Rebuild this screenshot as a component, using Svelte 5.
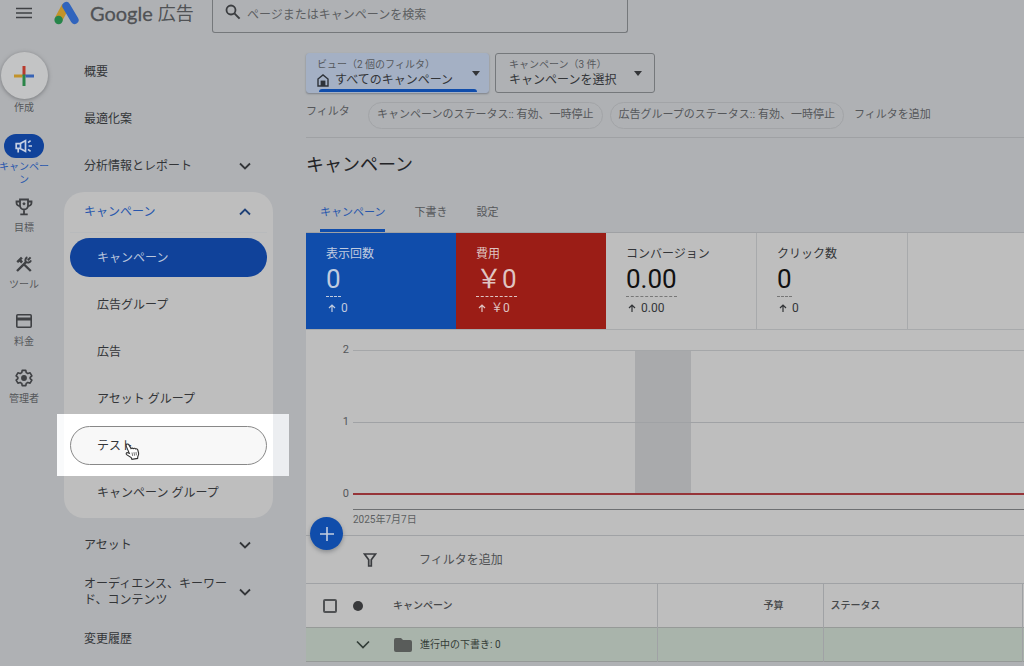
<script>
  const topItems = [
    { label: '概要', expandable: false },
    { label: '最適化案', expandable: false },
    { label: '分析情報とレポート', expandable: true }
  ];
  const campaignItems = ['キャンペーン', '広告グループ', '広告', 'アセット グループ', 'テスト', 'キャンペーン グループ'];
  const bottomItems = [
    { label: 'アセット', expandable: true },
    { label: 'オーディエンス、キーワード、コンテンツ', expandable: true },
    { label: '変更履歴', expandable: false }
  ];
  const metrics = [
    { label: '表示回数', value: '0', change: '0', tone: 'blue' },
    { label: '費用', value: '￥0', change: '￥0', tone: 'red' },
    { label: 'コンバージョン', value: '0.00', change: '0.00', tone: 'plain' },
    { label: 'クリック数', value: '0', change: '0', tone: 'plain' }
  ];
  const chips = ['キャンペーンのステータス:: 有効、一時停止', '広告グループのステータス:: 有効、一時停止'];
  let current = $state('キャンペーン');
</script>

{#snippet chevron(up)}
  <svg class="chevron" width="12" height="8" viewBox="0 0 12 8" aria-hidden="true">
    <path d={up ? 'M1 6.5 6 1.5 11 6.5' : 'M1 1.5 6 6.5 11 1.5'} fill="none" stroke="currentColor" stroke-width="1.8" />
  </svg>
{/snippet}

<div class="page">
  <header>
    <button class="menu" aria-label="メニュー">
      <svg width="16" height="12" viewBox="0 0 16 12"><path d="M0 1.5h16M0 6h16M0 10.5h16" stroke="#3f4144" stroke-width="1.6" /></svg>
    </button>
    <a class="brand" href="#home">
      <svg width="25" height="24" viewBox="0 0 25 24" aria-hidden="true">
        <path d="M8.200 3 15.400 6.500 8.200 20 1 16.500Z" fill="#c2932a" />
        <path d="M12.300 5 20.600 19" stroke="#3064bd" stroke-width="8" stroke-linecap="round" />
        <circle cx="4.600" cy="19" r="4.200" fill="#26854a" />
      </svg>
      <span class="google">Google</span><span class="ads">広告</span>
    </a>
    <label class="search">
      <svg width="16" height="16" viewBox="0 0 16 16" aria-hidden="true">
        <circle cx="6" cy="6" r="4.5" fill="none" stroke="#3b3d40" stroke-width="1.8" />
        <path d="M9.4 9.4 14.6 14.6" stroke="#3b3d40" stroke-width="2" />
      </svg>
      <input type="search" aria-label="検索" placeholder="ページまたはキャンペーンを検索" />
    </label>
  </header>

  <div class="body">
    <nav class="rail" aria-label="メイン">
      <button class="create">
        <span class="disc">
          <svg width="20" height="20" viewBox="0 0 20 20">
            <path d="M10 0v10" stroke="#b83a2d" stroke-width="3" />
            <path d="M0 10h8.5" stroke="#c2932a" stroke-width="3" />
            <path d="M10 8.5V20" stroke="#2a8548" stroke-width="3" />
            <path d="M11.5 10H20" stroke="#3763b5" stroke-width="3" />
          </svg>
        </span>
        作成
      </button>
      <a class="rail-item active" href="#campaigns">
        <span class="glyph">
          <svg width="20" height="16" viewBox="0 0 20 16" fill="none" stroke="#c6d0e4" stroke-width="1.7">
            <path d="M2.2 5.6h4L11.5 2.6v10.8L6.2 10.4h-4zM6.5 5.6v4.8M4.2 10.4v4" />
            <path d="M14 4.6 16.6 2.6M14.6 8H18M14 11.4 16.6 13.4" />
          </svg>
        </span>
        キャンペーン
      </a>
      <a class="rail-item" href="#goals">
        <span class="glyph">
          <svg width="18" height="18" viewBox="0 0 18 18" fill="none" stroke="#3f4144" stroke-width="1.8">
            <path d="M5 1.5h8v6a4 4 0 0 1-8 0zM5 3.5H1.5v1.3A3.2 3.2 0 0 0 5 8M13 3.5h3.5v1.3A3.2 3.2 0 0 1 13 8M9 11.5v5M5.3 16.4h7.4" />
            <circle cx="9" cy="5.8" r="1" fill="#3f4144" stroke-width="1" />
          </svg>
        </span>
        目標
      </a>
      <a class="rail-item" href="#tools">
        <span class="glyph">
          <svg width="18" height="18" viewBox="0 0 18 18" fill="none" stroke="#3f4144">
            <path d="M2 16 11.2 6.8M9.6 10 15.8 16" stroke-width="2.4" />
            <path d="M15.6 2.4 12.8 5.2M16 5.4A3.2 3.2 0 0 1 10.7 6.6 3.2 3.2 0 0 1 12.4 2.2" stroke-width="2" />
            <path d="M1.4 6.2 6 1.8 7.8 3.4 6.4 4.8 8 6.6 6.2 8.4 4.5 6.7 3 8z" fill="#3f4144" stroke="none" />
          </svg>
        </span>
        ツール
      </a>
      <a class="rail-item" href="#billing">
        <span class="glyph">
          <svg width="18" height="16" viewBox="0 0 18 16" fill="none" stroke="#3f4144">
            <rect x="1.8" y="1.8" width="14.4" height="12.4" rx="1" stroke-width="1.6" />
            <path d="M1.8 6h14.4" stroke-width="3" />
          </svg>
        </span>
        料金
      </a>
      <a class="rail-item" href="#admin">
        <span class="glyph">
          <svg width="18" height="18" viewBox="0 0 24 24" fill="none" stroke="#3f4144" stroke-width="2.2" stroke-linejoin="round">
            <path d="M9.6 1.8h4.8l.6 3 2.2 1.3 2.9-1 2.4 4.1-2.3 2v1.6l2.3 2-2.4 4.1-2.9-1-2.2 1.3-.6 3H9.600l-.6-3-2.200-1.300-2.900 1-2.400-4.100 2.300-2v-1.600l-2.300-2 2.400-4.100 2.900 1L9 4.800z" />
            <circle cx="12" cy="12" r="2.800" fill="#3f4144" />
          </svg>
        </span>
        管理者
      </a>
    </nav>

    <nav class="side" aria-label="セクション">
      {#each topItems as item}
        <button class="row">
          <span>{item.label}</span>
          {#if item.expandable}{@render chevron(false)}{/if}
        </button>
      {/each}
      <section class="card">
        <button class="card-head" aria-expanded="true">
          <span>キャンペーン</span>
          {@render chevron(true)}
        </button>
        <div class="items">
          {#each campaignItems as name}
            <div class="slot" class:spot={name === 'テスト'}>
              <button class="item" class:selected={current === name} onclick={() => (current = name)}>{name}</button>
              {#if name === 'テスト'}
                <svg class="cursor" width="15" height="17" viewBox="0 0 15 17" aria-hidden="true">
                  <path d="M1.500 1.600C2.300.6 3.300.9 3.900 1.900L6 5.600C6.700 4.900 7.700 5 8.200 5.700 9 5 10 5.200 10.500 5.900 11.500 5.500 12.500 6 12.800 7L13.600 10.200C13.900 11.600 13.300 12.600 12.800 13.600L12.600 15.400 6.900 16.300 6.200 14.600 1.600 11.600C.7 10.700 1.300 9.500 2.600 9.700L4.300 10.300 1.300 3.400C1 2.700 1 2.100 1.500 1.600Z" fill="#fff" stroke="#333" stroke-width="1.100" />
                  <path d="M7 9.500 7.700 13M9 9.200 9.600 12.700M11 9 11.400 12.300" stroke="#555" stroke-width=".8" />
                </svg>
              {/if}
            </div>
          {/each}
        </div>
      </section>
      {#each bottomItems as item}
        <button class="row">
          <span>{item.label}</span>
          {#if item.expandable}{@render chevron(false)}{/if}
        </button>
      {/each}
    </nav>

    <main>
      <div class="pickers">
        <button class="picker view">
          <span class="stack">
            <small>ビュー（2 個のフィルタ）</small>
            <span class="value">
              <svg width="12" height="13" viewBox="0 0 12 13" aria-hidden="true">
                <path d="M1 5 6 1l5 4v7H1z" fill="none" stroke="#2e3238" stroke-width="1.400" />
                <path d="M3.600 12V6.600h4.800V12z" fill="#2e3238" />
              </svg>
              すべてのキャンペーン
            </span>
          </span>
          <i class="caret"></i>
        </button>
        <button class="picker">
          <span class="stack">
            <small>キャンペーン（3 件）</small>
            <span class="value">キャンペーンを選択</span>
          </span>
          <i class="caret"></i>
        </button>
      </div>
      <div class="filters">
        <span class="filters-label">フィルタ</span>
        {#each chips as chip}<button class="chip">{chip}</button>{/each}
        <button class="add">フィルタを追加</button>
      </div>
      <h1>キャンペーン</h1>
      <div class="tabs" role="tablist">
        <button role="tab" aria-selected="true" class="tab on">キャンペーン</button>
        <button role="tab" aria-selected="false" class="tab">下書き</button>
        <button role="tab" aria-selected="false" class="tab">設定</button>
      </div>

      <div class="panel">
        <div class="metrics">
          {#each metrics as m}
            <button class="metric {m.tone}">
              <span class="m-label">{m.label}</span>
              <span class="m-value">{m.value}</span>
              <span class="m-change">
                <svg width="8" height="8" viewBox="0 0 8 8" aria-hidden="true"><path d="M4 8V1M1 4l3-3 3 3" fill="none" stroke="currentColor" stroke-width="1.200" /></svg>
                {m.change}
              </span>
            </button>
          {/each}
        </div>

        <div class="chart">
          <div class="ticks"><span>2</span><span>1</span><span>0</span></div>
          <div class="plot-area">
            <div class="plot"><div class="band"></div><div class="mid"></div></div>
            <div class="axis">2025年7月7日</div>
          </div>
        </div>

        <div class="toolbar">
          <button class="fab" aria-label="新しいキャンペーン">
            <svg width="14" height="14" viewBox="0 0 14 14"><path d="M7 0v14M0 7h14" stroke="#c3cee0" stroke-width="1.600" /></svg>
          </button>
          <svg width="14" height="14" viewBox="0 0 14 14" aria-hidden="true"><path d="M1.500 1h11L8.300 6.800V13H5.700V6.800z" fill="none" stroke="#3b3d40" stroke-width="1.700" /></svg>
          <button class="table-filter">フィルタを追加</button>
        </div>

        <table>
          <colgroup><col class="c-select" /><col class="c-name" /><col class="c-budget" /><col class="c-status" /><col /></colgroup>
          <thead>
            <tr>
              <th class="select"><div><input type="checkbox" aria-label="すべて選択" /><i class="dot"></i></div></th>
              <th class="name">キャンペーン</th>
              <th class="budget">予算</th>
              <th class="status">ステータス</th>
              <th></th>
            </tr>
          </thead>
          <tbody>
            <tr class="drafts">
              <td class="expand">
                <button aria-label="展開">
                  <svg width="14" height="9" viewBox="0 0 14 9"><path d="M1 1.500 7 7.500 13 1.500" fill="none" stroke="#333e38" stroke-width="1.700" /></svg>
                </button>
              </td>
              <td class="name">
                <div class="folder">
                  <svg width="18" height="14" viewBox="0 0 18 14" aria-hidden="true"><path d="M2 0h5l2 2h7a2 2 0 0 1 2 2v8a2 2 0 0 1-2 2H2a2 2 0 0 1-2-2V2a2 2 0 0 1 2-2z" fill="#595c5a" /></svg>
                  進行中の下書き: 0
                </div>
              </td>
              <td></td><td></td><td></td>
            </tr>
          </tbody>
        </table>
      </div>
    </main>
  </div>
</div>

<style>
  :global(body) {
    margin: 0;
    background: #afb1b4;
  }
  .page {
    min-height: 100vh;
    display: flex;
    flex-direction: column;
    background: #afb1b4;
    color: #333538;
    font-family: Roboto, 'Noto Sans CJK JP', sans-serif;
    font-size: 12px;
    line-height: 16px;
  }
  button {
    margin: 0;
    padding: 0;
    border: 0;
    background: none;
    color: inherit;
    font: inherit;
    text-align: left;
    cursor: pointer;
  }
  a { color: inherit; text-decoration: none; }
  svg { flex: none; display: block; }

  header {
    display: flex;
    align-items: flex-start;
    height: 48px;
  }
  .menu { padding: 7px 16px; }
  .brand {
    display: flex;
    align-items: center;
    width: 158px;
    padding-left: 6px;
    height: 25px;
    color: #505255;
  }
  .google {
    margin-left: 11px;
    font-family: Lato, sans-serif;
    font-size: 20px;
    line-height: 24px;
    -webkit-text-stroke: 0.3px;
  }
  .ads { margin-left: 5px; padding-top: 3px; font-size: 18px; line-height: 24px; }
  .search {
    flex: 0 1 416px;
    box-sizing: border-box;
    height: 33px;
    display: flex;
    align-items: center;
    gap: 6px;
    padding: 0 12px 8px;
    border: 1px solid #75787b;
    border-top: 0;
    border-radius: 0 0 3px 3px;
  }
  .search input {
    flex: 1;
    min-width: 0;
    padding: 6px 0 0;
    border: 0;
    outline: 0;
    background: none;
    font: inherit;
    color: inherit;
  }
  .search input::placeholder { color: #5c5e61; opacity: 1; }

  .body { display: flex; flex: 1; }

  .rail {
    flex: none;
    width: 48px;
    display: flex;
    flex-direction: column;
    align-items: center;
    font-size: 10px;
    line-height: 13px;
    color: #55575a;
  }
  .create {
    display: flex;
    flex-direction: column;
    align-items: center;
    padding-top: 4px;
    margin-bottom: 20px;
    gap: 2px;
  }
  .disc {
    width: 47px;
    height: 47px;
    border-radius: 50%;
    display: grid;
    place-items: center;
    background: #c3c4c5;
    box-shadow: 0 1px 4px #77797c;
  }
  .rail-item {
    display: flex;
    flex-direction: column;
    align-items: center;
    text-align: center;
    width: 50px;
    height: 57px;
    gap: 2px;
  }
  .rail-item.active { height: 61px; color: #2857ad; }
  .glyph { width: 40px; height: 24px; display: grid; place-items: center; }
  .active .glyph { background: #10429a; border-radius: 12px; }

  .side {
    flex: none;
    width: 209px;
    padding: 0 33px 0 16px;
  }
  .row {
    display: flex;
    align-items: center;
    justify-content: space-between;
    width: 100%;
    height: 47px;
    padding: 0 22px 0 20px;
  }
  .row span { flex: 0 1 146px; }
  .card {
    margin: 3px 0;
    padding-bottom: 6px;
    border-radius: 20px;
    background: #bebebe;
  }
  .card-head {
    display: flex;
    align-items: center;
    justify-content: space-between;
    width: 100%;
    height: 40px;
    padding: 0 22px 0 20px;
    color: #2857ad;
  }
  .card-head .chevron { color: #1f4177; }
  .items {
    display: flex;
    flex-direction: column;
    gap: 8px;
    margin: 0 6px;
    padding-top: 6px;
    box-shadow: inset 0 1px #b8babc;
  }
  .slot { position: relative; }
  .item {
    position: relative;
    box-sizing: border-box;
    width: 100%;
    height: 39px;
    padding: 0 27px;
    border-radius: 20px;
  }
  .item.selected { background: #10429a; color: #b9c5dc; }
  .spot .item { background: #f8f8f8; border: 1px solid #888; padding: 0 26px; }
  .spot .item.selected { background: #10429a; }
  .spot::before {
    content: '';
    position: absolute;
    inset: -12px -22px -11px -13px;
    background: linear-gradient(90deg, #f9fafb 7px, #fff 7px 216px, #eceef1 216px);
  }
  .cursor { position: absolute; left: 55px; top: 17px; }

  main { flex: 1; min-width: 0; padding-top: 5px; }
  .pickers { display: flex; gap: 6px; }
  .picker {
    position: relative;
    box-sizing: border-box;
    height: 40px;
    width: 160px;
    padding: 0 12px 0 13px;
    display: flex;
    align-items: center;
    justify-content: space-between;
    border: 1px solid #75787b;
    border-radius: 3px;
  }
  .picker.view {
    width: 183px;
    padding: 0 8px 0 10px;
    background: #a4b0c4;
    border-color: #a4b0c4;
    box-shadow: 0 1px 2px #7c8088;
  }
  .view::after {
    content: '';
    position: absolute;
    left: 12px;
    right: 11px;
    bottom: 0;
    height: 3px;
    border-radius: 3px 3px 0 0;
    background: #104dab;
  }
  .stack { display: flex; flex-direction: column; white-space: nowrap; }
  .stack small { font-size: 10px; line-height: 15px; color: #55585c; }
  .value { display: flex; align-items: center; gap: 6px; line-height: 17px; }
  .caret {
    border: 4px solid transparent;
    border-top: 5px solid #333538;
    border-bottom: 0;
  }
  .filters {
    display: flex;
    align-items: center;
    gap: 7px;
    height: 45px;
    box-sizing: border-box;
    border-bottom: 1px solid #9fa1a4;
    font-size: 11px;
    color: #55575a;
    white-space: nowrap;
  }
  .filters-label { width: 55px; padding-bottom: 6px; }
  .chip {
    box-sizing: border-box;
    height: 27px;
    padding: 0 8px;
    border: 1px solid #a2a4a7;
    border-radius: 14px;
  }
  .add { padding-left: 3px; }
  h1 {
    margin: 0;
    padding: 14px 0 12px;
    font-size: 18px;
    line-height: 26px;
    font-weight: 400;
    color: #232427;
  }
  .tabs { display: flex; gap: 29px; padding-left: 14px; font-size: 11px; color: #55575a; }
  .tab { height: 42px; padding-top: 6px; border-bottom: 3px solid transparent; box-sizing: border-box; }
  .tab.on { color: #2857ad; border-color: #104dab; }

  .panel { background: #bebebe; border-top: 1px solid #9fa1a4; }
  .metrics { display: flex; border-bottom: 1px solid #a8aaac; }
  .metric {
    box-sizing: border-box;
    width: 150px;
    height: 96px;
    padding: 13px 20px 0;
    display: flex;
    flex-direction: column;
    align-items: flex-start;
  }
  .metric.plain { width: 151px; border-right: 1px solid #a8aaac; }
  .blue { background: #104dab; color: #c0cbdf; }
  .red { background: #9b1d16; color: #dfc4c2; }
  .m-value {
    font-size: 26px;
    line-height: 34px;
    border-bottom: 1px dashed currentColor;
  }
  .plain .m-value { color: #111; border-color: #777; }
  .m-change { display: flex; align-items: center; gap: 5px; margin: 3px 0 0 2px; }

  .chart { display: flex; height: 205px; box-sizing: border-box; padding-top: 20px; }
  .ticks {
    width: 43px;
    height: 160px;
    margin: -8px 4px 0 0;
    display: flex;
    flex-direction: column;
    justify-content: space-between;
    text-align: right;
    font-size: 11px;
    color: #55575a;
  }
  .plot-area { flex: 1; }
  .plot {
    position: relative;
    box-sizing: border-box;
    height: 145px;
    border-top: 1px solid #a5a7a9;
    border-bottom: 2px solid #963438;
  }
  .band { position: absolute; left: 42%; width: 8.4%; top: 0; bottom: 0; background: #a9aaac; }
  .mid { position: absolute; left: 0; right: 0; top: 71px; border-top: 1px solid #a0a2a5; }
  .axis {
    margin-top: 14px;
    padding-top: 2px;
    border-top: 1px solid #6e7072;
    font-size: 10px;
    color: #5c5e61;
  }

  .toolbar {
    position: relative;
    display: flex;
    align-items: center;
    gap: 42px;
    height: 48px;
    box-sizing: border-box;
    padding-left: 57px;
    border-top: 1px solid #a0a2a5;
    color: #4f5153;
  }
  .fab {
    position: absolute;
    left: 4px;
    top: -19px;
    width: 33px;
    height: 33px;
    border-radius: 50%;
    display: grid;
    place-items: center;
    background: #104dab;
    box-shadow: 0 2px 4px #8a8c8f;
  }

  table {
    width: 100%;
    table-layout: fixed;
    border-collapse: collapse;
    font-size: 10px;
    border-bottom: 1px solid #a0a2a5;
  }
  .c-select { width: 76px; }
  .c-name { width: 275px; }
  .c-budget { width: 166px; }
  .c-status { width: 199px; }
  th {
    height: 43px;
    padding: 0;
    font-weight: 500;
    text-align: left;
    color: #46484a;
  }
  thead tr { border-top: 1px solid #a0a2a5; }
  td { height: 33px; padding: 0; color: #333b36; }
  tr > :nth-child(n + 2) { border-right: 1px solid #a0a2a5; }
  tr > :last-child { border-right: 0; }
  .select div { display: flex; align-items: center; gap: 16px; padding-left: 17px; }
  .select input {
    appearance: none;
    width: 14px;
    height: 14px;
    margin: 0;
    border: 2px solid #505254;
    border-radius: 2px;
    box-sizing: border-box;
  }
  .dot { width: 10px; height: 10px; border-radius: 50%; background: #38393b; }
  .name { padding-left: 11px; }
  .budget { text-align: right; padding-right: 39px; }
  .status { padding-left: 7px; }
  .drafts { background: #a9b4ab; border-top: 1px solid #969a98; border-bottom: 1px solid #969a98; }
  .expand button { padding: 4px 0 4px 50px; }
  .folder { display: flex; align-items: center; gap: 8px; }
  td.name { padding-left: 12px; }
</style>
